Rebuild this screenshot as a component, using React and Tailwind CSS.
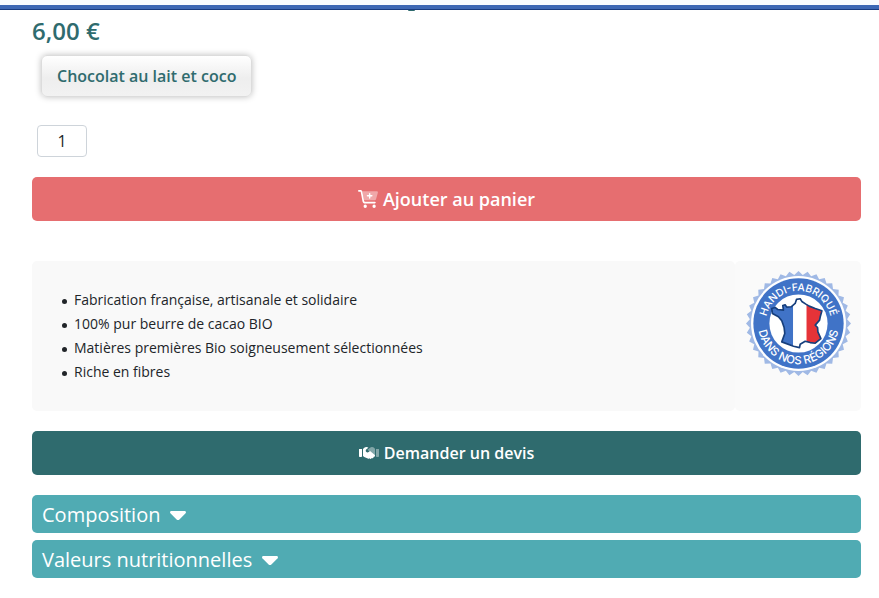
const TEETH = 36;

// zigzag outline of the seal, alternating between the two radii
const sealPoints = Array.from({ length: TEETH * 2 }, (_, i) => {
  const angle = (i * Math.PI) / TEETH - Math.PI / 2;
  const r = i % 2 === 0 ? 157 : 146;
  return `${(160 + r * Math.cos(angle)).toFixed(1)},${(160 + r * Math.sin(angle)).toFixed(1)}`;
}).join(' ');

const francePath =
  'M154 88 L165 86 L170 94 L182 102 L192 108 L210 115 L230 122 L225 140 L223 150 L210 165 L217 172 L218 185 L227 205 L210 219 L195 217 L180 213 L165 222 L163 232 L145 228 L110 215 L119 190 L117 172 L110 152 L100 140 L82 130 L80 115 L90 112 L98 118 L115 120 L113 106 L120 104 L125 111 L138 110 L150 100 Z';

const features = [
  'Fabrication française, artisanale et solidaire',
  '100% pur beurre de cacao BIO',
  'Matières premières Bio soigneusement sélectionnées',
  'Riche en fibres',
];

const sections = ['Composition', 'Valeurs nutritionnelles'];

function CartIcon() {
  return (
    <svg className="h-[18px] w-5 shrink-0" viewBox="0 0 576 512" fill="currentColor" aria-hidden="true">
      <path
        opacity="0.4"
        d="M122 32H541c21 0 37 20 31 41l-53 192c-5 16-19 27-36 27H171L122 32z"
      />
      <path d="M24 0C11 0 0 11 0 24s11 24 24 24h46c4 0 7 3 8 6l52 271c6 34 36 59 71 59h287c13 0 24-11 24-24s-11-24-24-24H201c-12 0-22-8-24-20L125 45C120 19 97 0 70 0H24zm184 512a48 48 0 1 0 0-96 48 48 0 1 0 0 96zm256 0a48 48 0 1 0 0-96 48 48 0 1 0 0 96zM316 228v-44h-44c-11 0-20-9-20-20s9-20 20-20h44v-44c0-11 9-20 20-20s20 9 20 20v44h44c11 0 20 9 20 20s-9 20-20 20h-44v44c0 11-9 20-20 20s-20-9-20-20z" />
    </svg>
  );
}

function HandshakeIcon() {
  return (
    <svg className="h-4 w-5 shrink-0" viewBox="0 0 640 512" fill="currentColor" aria-hidden="true">
      <path
        opacity="0.4"
        d="M272 150l72-58c20-17 45-28 71-28 29 0 56 11 76 31l21 33v224h-10L352 222zM544 128h96v224c0 18-14 32-32 32h-32c-18 0-32-14-32-32V128z"
      />
      <path d="M0 128h96v224c0 18-14 32-32 32H32c-18 0-32-14-32-32V128zM128 128l40-37c19-17 43-27 69-27 23 0 45 7 64 20l-63 50c-26 20-30 57-10 83 20 25 57 30 82 10l44-34 144 121c16 13 18 37 5 53-9 11-24 16-37 12 3 14-1 29-13 39-14 11-33 11-46 1-5 14-18 25-34 25-14 1-27-6-34-18-8 11-24 16-38 10L166 384l-38-32V128z" />
    </svg>
  );
}

function CaretIcon() {
  return (
    <svg className="h-[9px] w-4 shrink-0" viewBox="0 0 16 9" fill="currentColor" aria-hidden="true">
      <path d="M1.400 0h13.200c1.200 0 1.800 1.300 1 2.200L9.400 8.400c-.8.800-2 .8-2.800 0L.4 2.200C-.4 1.300.2 0 1.400 0z" />
    </svg>
  );
}

function FranceBadge() {
  return (
    <svg className="w-[107px]" viewBox="0 0 320 320" role="img" aria-label="Handi-fabriqué dans nos régions">
      <defs>
        <path id="arc-top" d="M64 180a98 98 0 1 1 192 0" />
        <path id="arc-bottom" d="M43 130a121 121 0 1 0 234 0" />
        <clipPath id="france">
          <path d={francePath} />
        </clipPath>
      </defs>
      <polygon points={sealPoints} fill="#a0b9e5" />
      <circle cx="160" cy="160" r="142" fill="#fff" />
      <circle cx="160" cy="160" r="135" fill="#4073c7" />
      <circle cx="160" cy="160" r="87" fill="#fff" />
      <g clipPath="url(#france)">
        <path d="M70 80h74v160H70z" fill="#4073c7" />
        <path d="M144 80h40v160h-40z" fill="#fff" />
        <path d="M184 80h60v160h-60z" fill="#e63338" />
      </g>
      <path d={francePath} fill="none" stroke="#173f7c" strokeWidth="5" strokeLinejoin="round" />
      <g fill="#fff" fontFamily="Inter, sans-serif" fontWeight="500" textAnchor="middle">
        <text fontSize="31">
          <textPath href="#arc-top" startOffset="50%">HANDI-FABRIQUÉ</textPath>
        </text>
        <text fontSize="34">
          <textPath href="#arc-bottom" startOffset="50%">DANS NOS RÉGIONS</textPath>
        </text>
      </g>
    </svg>
  );
}

export default function App() {
  return (
    <div className="bg-white font-['Open_Sans',sans-serif] text-[#212529]">
      <header className="relative h-[10px] border-b border-[#183a80] bg-[#f8faff] pt-[5px]">
        <div className="h-1 bg-[#3c66b5]" />
        <div className="absolute top-[10px] left-[408px] h-px w-[7px] rounded-b bg-[#2f6b6e]" />
      </header>

      <main className="pr-[18px] pb-5 pl-8">
        <p className="pt-[5px] text-2xl leading-8 font-semibold text-[#2f6b6e]">6,00 €</p>

        <button
          type="button"
          className="mt-2 ml-[9px] flex h-[42px] items-center rounded-md border border-[#dcdcdc] bg-linear-to-b from-white from-0% via-[#eeeeee] via-55% to-[#f2f2f2] px-[15px] font-semibold text-[#2f6b6e] shadow-[0_0_6px_rgba(0,0,0,0.25)]"
        >
          Chocolat au lait et coco
        </button>

        <input
          type="text"
          defaultValue="1"
          aria-label="Quantité"
          className="mt-7 ml-[5px] block h-8 w-[50px] rounded-sm border border-[#ced4da] bg-white text-center text-base"
        />

        <button
          type="button"
          className="mt-5 flex h-11 w-full items-center justify-center gap-[5px] rounded-[5px] bg-[#e66e70] text-lg font-semibold text-white"
        >
          <CartIcon />
          Ajouter au panier
        </button>

        <div className="mt-10 flex h-[150px]">
          <div className="flex-1 rounded-[5px] bg-[#f9f9f9] pt-[27px] pl-[30px]">
            <ul className="text-sm leading-6">
              {features.map((feature) => (
                <li
                  key={feature}
                  className="flex items-center gap-[7px] before:mt-[2px] before:size-[5px] before:rounded-full before:bg-[#212529]"
                >
                  {feature}
                </li>
              ))}
            </ul>
          </div>
          <div className="flex w-[126px] items-start justify-center rounded-[5px] bg-[#fafafa] pt-[9px]">
            <FranceBadge />
          </div>
        </div>

        <button
          type="button"
          className="mt-5 flex h-11 w-full items-center justify-center gap-[5px] rounded-[5px] bg-[#2f6b6e] font-semibold text-white"
        >
          <HandshakeIcon />
          Demander un devis
        </button>

        <div className="mt-5 flex flex-col gap-[7px]">
          {sections.map((section) => (
            <button
              key={section}
              type="button"
              className="flex h-[38px] items-center gap-[10px] rounded-[5px] bg-[#50abb3] px-[10px] pt-[2px] text-xl text-white"
            >
              {section}
              <CaretIcon />
            </button>
          ))}
        </div>
      </main>
    </div>
  );
}
